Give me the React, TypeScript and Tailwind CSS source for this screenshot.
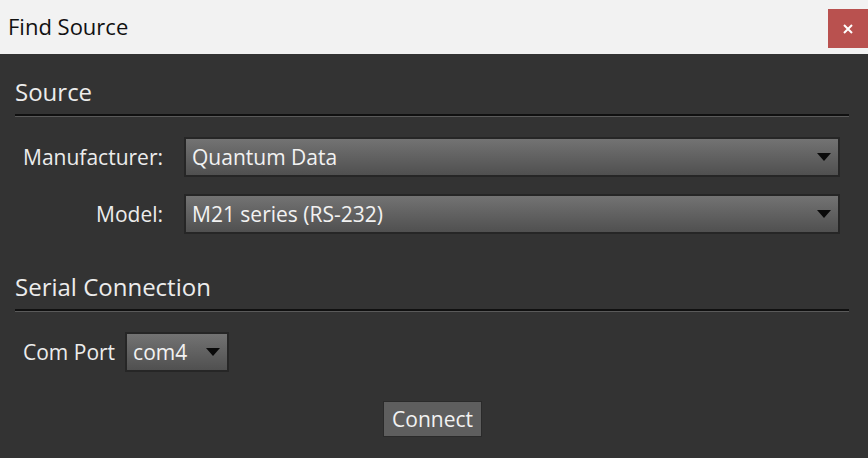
import React from 'react';

const Arrow = () => (
  <svg width="14" height="8" viewBox="0 0 14 8" className="shrink-0">
    <path d="M0 0H14L7 8Z" fill="#0a0a0a" />
  </svg>
);

const Select = ({ value, className }: { value: string; className: string }) => (
  <div
    className={`flex items-center justify-between border-2 border-[#262626] bg-gradient-to-b from-[#737373] to-[#505050] text-[#f2f2f2] text-[21px] pl-[6px] pr-[7px] ${className}`}
  >
    <span className="leading-none">{value}</span>
    <Arrow />
  </div>
);

const Section = ({ title }: { title: string }) => (
  <div className="pl-[15px] pr-[19px]">
    <h2 className="text-[24px] text-[#ececec] leading-none pb-[10px]">{title}</h2>
    <div className="h-[2px] bg-[#101010]" />
    <div className="h-[1px] bg-[#5a5a5a]" />
  </div>
);

export default function App() {
  return (
    <div className="w-[868px] h-[458px] bg-[#333333] flex flex-col" style={{ fontFamily: '"Open Sans", "Noto Sans", sans-serif' }}>
      <header className="h-[54px] bg-[#f2f2f2] flex items-start justify-between">
        <span className="text-[22px] text-[#111] pl-[8px] pt-[15px] leading-none">Find Source</span>
        <button className="mt-[9px] w-[40px] h-[39px] bg-[#b9514f] flex items-center justify-center">
          <svg width="10" height="10" viewBox="0 0 10 10">
            <path d="M1 1L9 9M9 1L1 9" stroke="#fff" strokeWidth="2" />
          </svg>
        </button>
      </header>

      <div className="pt-[26px]">
        <Section title="Source" />
      </div>

      <div className="flex flex-col gap-[17px] pt-[20px]">
        <div className="flex items-center">
          <label className="w-[163px] text-right text-[21px] text-[#ececec] leading-none">Manufacturer:</label>
          <Select value="Quantum Data" className="ml-[21px] w-[656px] h-[40px]" />
        </div>
        <div className="flex items-center">
          <label className="w-[163px] text-right text-[21px] text-[#ececec] leading-none">Model:</label>
          <Select value="M21 series (RS-232)" className="ml-[21px] w-[656px] h-[40px]" />
        </div>
      </div>

      <div className="pt-[41px]">
        <Section title="Serial Connection" />
      </div>

      <div className="flex items-center pt-[20px] pl-[23px]">
        <label className="text-[21px] text-[#ececec] leading-none">Com Port</label>
        <Select value="com4" className="ml-[10px] w-[104px] h-[40px]" />
      </div>

      <div className="flex justify-center pt-[29px]">
        <button className="ml-[-3px] w-[99px] h-[36px] bg-[#5e5e5e] border border-[#2a2a2a] text-[21px] text-[#f2f2f2] leading-none">
          Connect
        </button>
      </div>
    </div>
  );
}
